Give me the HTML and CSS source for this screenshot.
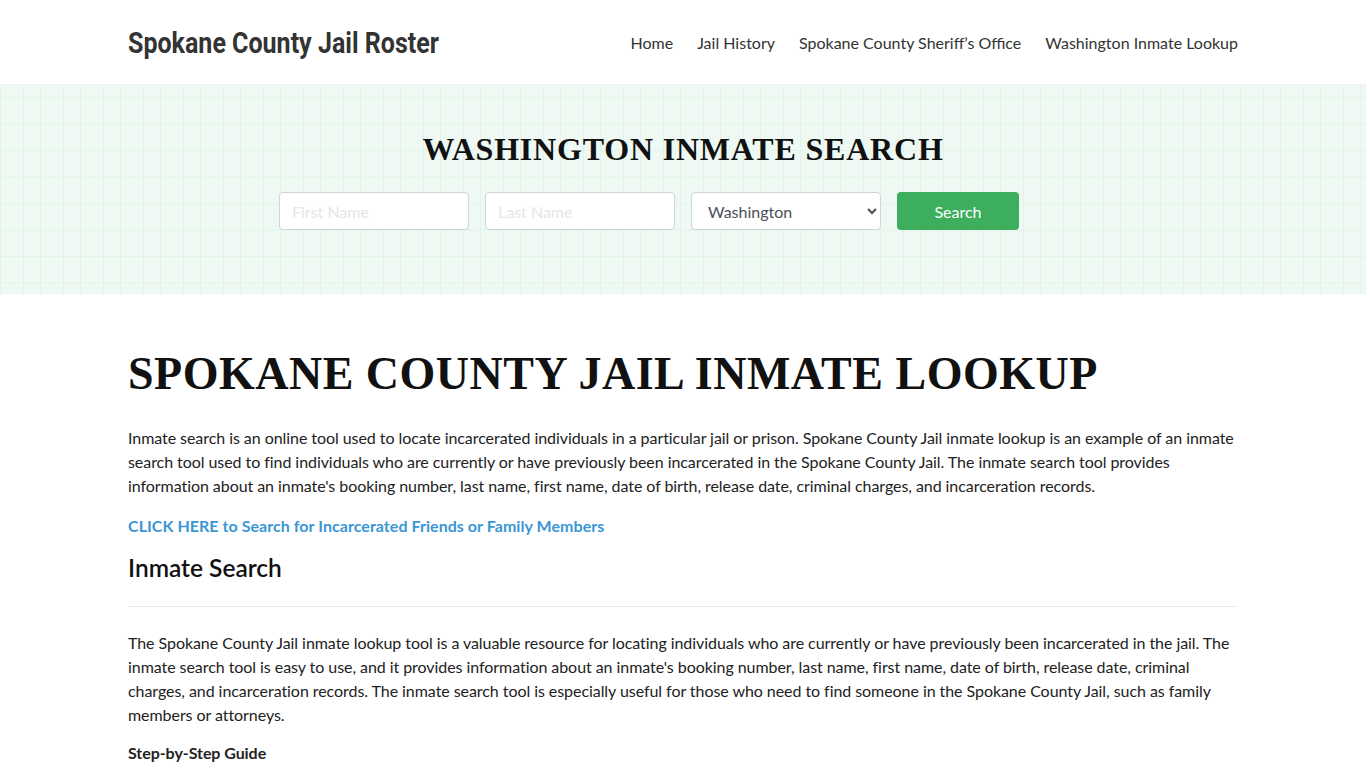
FILE: index.html
```html
<!DOCTYPE html>
<html lang="en">
<head>
<meta charset="utf-8">
<title>Spokane County Jail Roster</title>
<link rel="stylesheet" href="styles.css">
</head>
<body>
<header class="site-header">
  <div class="container header-inner">
    <a class="logo" href="#"><span class="logo-text">Spokane County Jail Roster</span></a>
    <nav class="nav">
      <a href="#">Home</a>
      <a href="#">Jail History</a>
      <a href="#">Spokane County Sheriff’s Office</a>
      <a href="#">Washington Inmate Lookup</a>
    </nav>
  </div>
</header>
<section class="hero">
  <h2 class="hero-title">WASHINGTON INMATE SEARCH</h2>
  <form class="search-form">
    <input class="field" type="text" placeholder="First Name">
    <input class="field" type="text" placeholder="Last Name">
    <select class="field select">
      <option>Washington</option>
    </select>
    <button class="btn" type="button">Search</button>
  </form>
</section>
<main class="container content">
  <h1 class="page-title">SPOKANE COUNTY JAIL INMATE LOOKUP</h1>
  <p>Inmate search is an online tool used to locate incarcerated individuals in a particular jail or prison. Spokane County Jail inmate lookup is an example of an inmate search tool used to find individuals who are currently or have previously been incarcerated in the Spokane County Jail. The inmate search tool provides information about an inmate's booking number, last name, first name, date of birth, release date, criminal charges, and incarceration records.</p>
  <p><a class="cta" href="#">CLICK HERE to Search for Incarcerated Friends or Family Members</a></p>
  <h2 class="section-title">Inmate Search</h2>
  <hr class="rule">
  <p>The Spokane County Jail inmate lookup tool is a valuable resource for locating individuals who are currently or have previously been incarcerated in the jail. The inmate search tool is easy to use, and it provides information about an inmate's booking number, last name, first name, date of birth, release date, criminal charges, and incarceration records. The inmate search tool is especially useful for those who need to find someone in the Spokane County Jail, such as family members or attorneys.</p>
  <p class="strong">Step-by-Step Guide</p>
</main>
</body>
</html>
```
FILE: styles.css
```css
* { box-sizing: border-box; }
html, body { margin: 0; padding: 0; }
body {
  font-family: Lato, "Open Sans", sans-serif;
  font-size: 16px;
  line-height: 24px;
  color: #222;
  background: #fff;
}
a { text-decoration: none; }
.container {
  width: 1110px;
  margin: 0 auto;
}
.site-header { height: 84px; background: #fff; }
.header-inner {
  height: 84px;
  display: flex;
  align-items: center;
  justify-content: space-between;
}
.logo {
  display: block;
  width: 310px;
  height: 40px;
  overflow: visible;
  white-space: nowrap;
}
.logo-text {
  display: inline-block;
  font-family: Roboto, "Liberation Sans", sans-serif;
  font-weight: 700;
  font-size: 30px;
  line-height: 40px;
  color: #333;
  transform: scaleX(0.834);
  transform-origin: 0 50%;
  margin-top: 1px;
}
.nav { display: flex; gap: 24px; padding-top: 2px; }
.nav a { color: #333; font-size: 16px; }
.hero {
  height: 210px;
  background-color: #edf9f2;
  background-image:
    linear-gradient(90deg, rgba(205, 228, 214, 0.28) 1px, transparent 1px),
    linear-gradient(90deg, rgba(205, 228, 214, 0.28) 1px, transparent 1px),
    linear-gradient(0deg, rgba(205, 228, 214, 0.28) 1px, transparent 1px);
  background-size: 40px 100%, 40px 100%, 100% 26.5px;
  background-position: 0 0, 23px 0, 0 13px;
  padding-top: 46px;
  border-top: 1px solid #eef2ef;
}
.hero-title {
  margin: 0 0 25px;
  text-align: center;
  font-family: "Liberation Serif", "Times New Roman", serif;
  font-weight: 700;
  font-size: 32px;
  line-height: 36px;
  letter-spacing: 0.8px;
  color: #111;
}
.search-form {
  display: flex;
  justify-content: center;
  gap: 16px;
  padding-right: 68px;
}
.field {
  width: 190px;
  height: 38px;
  border: 1px solid #ced4da;
  border-radius: 4px;
  background: #fff;
  padding: 0 12px;
  font-family: Lato, sans-serif;
  font-size: 16px;
  color: #495057;
}
.field::placeholder { color: #e3e6e8; }
.btn {
  width: 122px;
  height: 38px;
  border: none;
  border-radius: 4px;
  background: #3cae5e;
  color: #fff;
  font-family: Lato, sans-serif;
  font-size: 16px;
}
.content { padding-top: 52px; }
.page-title {
  margin: 0 0 24px;
  font-family: "Liberation Serif", "Times New Roman", serif;
  font-weight: 700;
  font-size: 46px;
  line-height: 56px;
  letter-spacing: 0.5px;
  color: #111;
}
.content p { margin: 0 0 16px; letter-spacing: -0.06px; }
.cta { color: #3a97d4; font-weight: 700; letter-spacing: 0.05px; }
.section-title {
  margin: 0;
  font-size: 24.5px;
  line-height: 28px;
  font-weight: 600;
  color: #111;
}
.rule {
  margin: 24px 0 24px;
  border: 0;
  border-top: 1px solid #e9ecef;
}
.content p.strong { font-weight: 700; line-height: 20px; }
```
